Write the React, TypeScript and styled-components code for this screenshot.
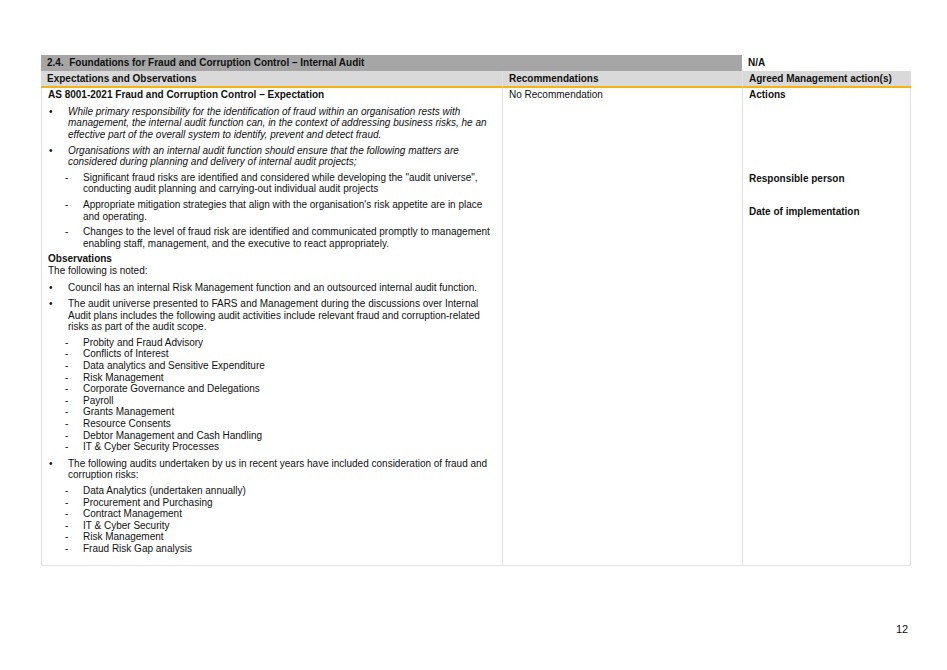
import React from "react";
import styled, { createGlobalStyle } from "styled-components";

const G = createGlobalStyle`
  body{margin:0;background:#fff;font-family:"Liberation Sans",Arial,sans-serif;color:#111;}
`;
const Page = styled.div`width:947px;height:670px;position:relative;padding:55px 36px 0 41px;box-sizing:border-box;`;
const Table = styled.div`display:grid;grid-template-columns:461px 240px 169px;width:870px;font-size:10px;line-height:11.6px;`;
const Cell = styled.div<{ $bg?: string; $bold?: boolean; $span?: number; $orange?: boolean; $lb?: boolean }>`
  background:${p => p.$bg || "#fff"};
  font-weight:${p => (p.$bold ? 700 : 400)};
  grid-column:span ${p => p.$span || 1};
  padding:2px 6px 2px 6px;
  border-bottom:${p => (p.$orange ? "2px solid #f5b31a" : "none")};
  border-left:${p => (p.$lb ? "1px solid #e2e2e2" : "none")};
`;
const Body = styled.div<{ $lb?: boolean; $rb?: boolean }>`
  padding:1px 6px 10px 6px;height:478px;box-sizing:border-box;
  border-left:1px solid #e2e2e2;
  border-right:${p => (p.$rb ? "1px solid #e2e2e2" : "none")};
  border-bottom:1px solid #e2e2e2;
`;
const B = styled.div<{ $mt?: number }>`font-weight:700;margin-top:${p => p.$mt || 0}px;`;
const P = styled.div``;
const List = styled.ul<{ $it?: boolean; $dash?: boolean }>`
  list-style:none;margin:${p => (p.$dash ? "4px 0 0 0" : "5px 0 0 0")};padding:0;
  font-style:${p => (p.$it ? "italic" : "normal")};
`;
const Item = styled.li<{ $dash?: boolean; $gap?: number }>`
  position:relative;padding-left:${p => (p.$dash ? 35 : 20)}px;margin-bottom:${p => p.$gap ?? 4}px;
  &::before{content:"${p => (p.$dash ? "-" : "•")}";position:absolute;left:${p => (p.$dash ? 17 : 1)}px;font-style:normal;}
`;
const Num = styled.div`position:absolute;left:896px;top:623px;font-size:11px;`;

export default function App() {
  const dashes1 = [
    "Significant fraud risks are identified and considered while developing the \"audit universe\", conducting audit planning and carrying-out individual audit projects",
    "Appropriate mitigation strategies that align with the organisation's risk appetite are in place and operating.",
    "Changes to the level of fraud risk are identified and communicated promptly to management enabling staff, management, and the executive to react appropriately.",
  ];
  const d2 = ["Probity and Fraud Advisory","Conflicts of Interest","Data analytics and Sensitive Expenditure","Risk Management","Corporate Governance and Delegations","Payroll","Grants Management","Resource Consents","Debtor Management and Cash Handling","IT & Cyber Security Processes"];
  const d3 = ["Data Analytics (undertaken annually)","Procurement and Purchasing","Contract Management","IT & Cyber Security","Risk Management","Fraud Risk Gap analysis"];
  return (
    <Page>
      <G />
      <Table>
        <Cell $bg="#a6a6a6" $bold $span={2}>2.4.&nbsp; Foundations for Fraud and Corruption Control – Internal Audit</Cell>
        <Cell $bold>N/A</Cell>
        <Cell $bg="#d9d9d9" $bold $orange>Expectations and Observations</Cell>
        <Cell $bg="#d9d9d9" $bold $orange $lb>Recommendations</Cell>
        <Cell $bg="#d9d9d9" $bold $orange $lb>Agreed Management action(s)</Cell>
        <Body>
          <B>AS 8001-2021 Fraud and Corruption Control – Expectation</B>
          <List $it>
            <Item>While primary responsibility for the identification of fraud within an organisation rests with management, the internal audit function can, in the context of addressing business risks, he an effective part of the overall system to identify, prevent and detect fraud.</Item>
            <Item>Organisations with an internal audit function should ensure that the following matters are considered during planning and delivery of internal audit projects;
              <List $dash style={{ marginLeft: -20 }}>
                {dashes1.map(t => <Item $dash key={t}>{t}</Item>)}
              </List>
            </Item>
          </List>
          <B>Observations</B>
          <P>The following is noted:</P>
          <List>
            <Item $gap={5}>Council has an internal Risk Management function and an outsourced internal audit function.</Item>
            <Item $gap={5}>The audit universe presented to FARS and Management during the discussions over Internal Audit plans includes the following audit activities include relevant fraud and corruption-related risks as part of the audit scope.
              <List $dash style={{ marginLeft: -20 }}>
                {d2.map(t => <Item $dash $gap={0} key={t}>{t}</Item>)}
              </List>
            </Item>
            <Item>The following audits undertaken by us in recent years have included consideration of fraud and corruption risks:
              <List $dash style={{ marginLeft: -20 }}>
                {d3.map(t => <Item $dash $gap={0} key={t}>{t}</Item>)}
              </List>
            </Item>
          </List>
        </Body>
        <Body><P>No Recommendation</P></Body>
        <Body $rb>
          <B>Actions</B>
          <B $mt={72}>Responsible person</B>
          <B $mt={22}>Date of implementation</B>
        </Body>
      </Table>
      <Num>12</Num>
    </Page>
  );
}
